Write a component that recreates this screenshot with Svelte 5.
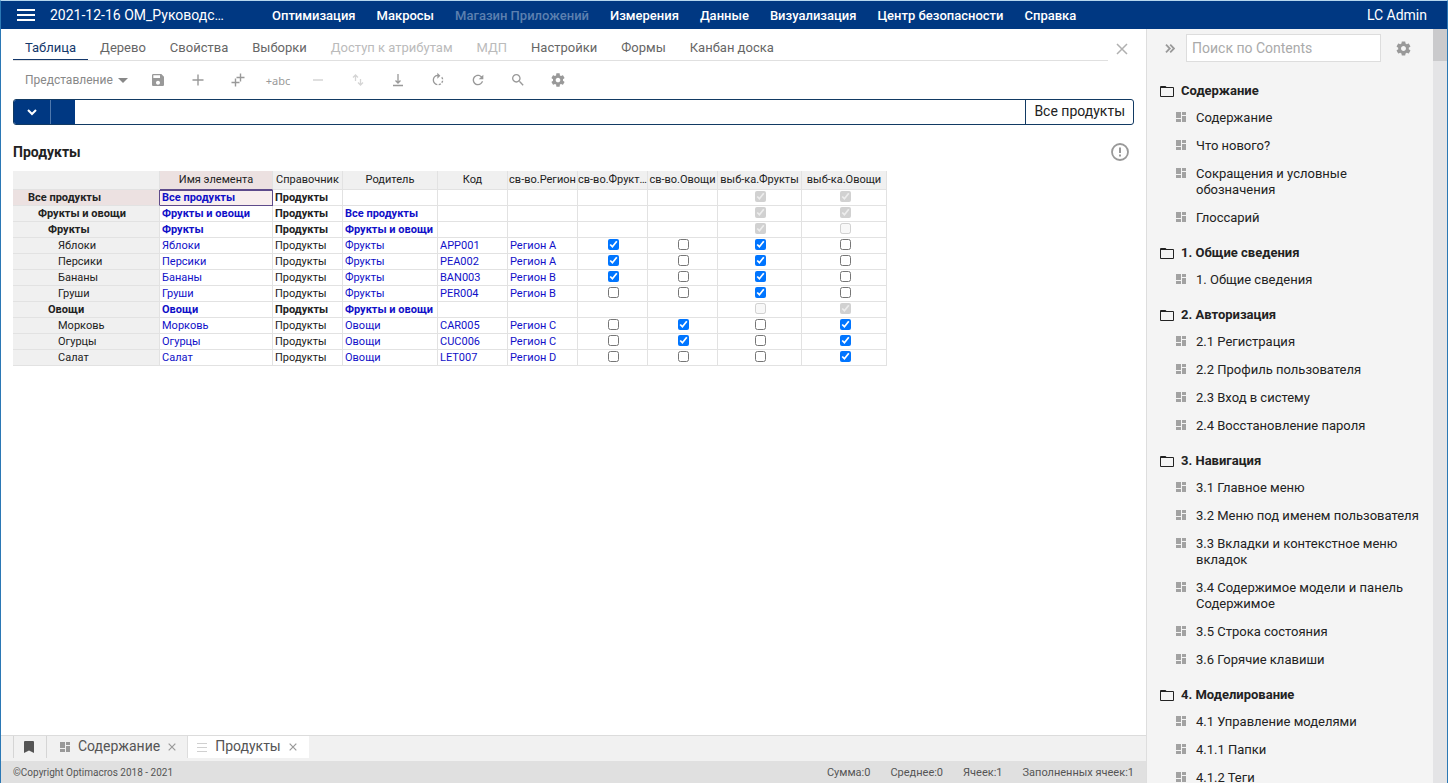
<script>
  const menu = [
    { label: 'Оптимизация' },
    { label: 'Макросы' },
    { label: 'Магазин Приложений', disabled: true },
    { label: 'Измерения' },
    { label: 'Данные' },
    { label: 'Визуализация' },
    { label: 'Центр безопасности' },
    { label: 'Справка' },
  ];

  const tabs = [
    { label: 'Таблица', active: true },
    { label: 'Дерево' },
    { label: 'Свойства' },
    { label: 'Выборки' },
    { label: 'Доступ к атрибутам', disabled: true },
    { label: 'МДП', disabled: true },
    { label: 'Настройки' },
    { label: 'Формы' },
    { label: 'Канбан доска' },
  ];

  const columns = [
    'Имя элемента',
    'Справочник',
    'Родитель',
    'Код',
    'св-во.Регион',
    'св-во.Фрукты',
    'св-во.Овощи',
    'выб-ка.Фрукты',
    'выб-ка.Овощи',
  ];

  const widths = [147, 113, 70, 95, 70, 70, 70, 70, 84, 85];

  // flags: property Fruits, property Vegetables, subset Fruits, subset Vegetables
  const rows = [
    { name: 'Все продукты', level: 0, parent: '', code: '', region: '', flags: [null, null, true, true] },
    { name: 'Фрукты и овощи', level: 1, parent: 'Все продукты', code: '', region: '', flags: [null, null, true, true] },
    { name: 'Фрукты', level: 2, parent: 'Фрукты и овощи', code: '', region: '', flags: [null, null, true, false] },
    { name: 'Яблоки', level: 3, parent: 'Фрукты', code: 'APP001', region: 'Регион A', flags: [true, false, true, false] },
    { name: 'Персики', level: 3, parent: 'Фрукты', code: 'PEA002', region: 'Регион A', flags: [true, false, true, false] },
    { name: 'Бананы', level: 3, parent: 'Фрукты', code: 'BAN003', region: 'Регион B', flags: [true, false, true, false] },
    { name: 'Груши', level: 3, parent: 'Фрукты', code: 'PER004', region: 'Регион B', flags: [false, false, true, false] },
    { name: 'Овощи', level: 2, parent: 'Фрукты и овощи', code: '', region: '', flags: [null, null, false, true] },
    { name: 'Морковь', level: 3, parent: 'Овощи', code: 'CAR005', region: 'Регион C', flags: [false, true, false, true] },
    { name: 'Огурцы', level: 3, parent: 'Овощи', code: 'CUC006', region: 'Регион C', flags: [false, true, false, true] },
    { name: 'Салат', level: 3, parent: 'Овощи', code: 'LET007', region: 'Регион D', flags: [false, false, false, true] },
  ];

  const contents = [
    { title: 'Содержание', items: ['Содержание', 'Что нового?', 'Сокращения и условные обозначения', 'Глоссарий'] },
    { title: '1. Общие сведения', items: ['1. Общие сведения'] },
    { title: '2. Авторизация', items: ['2.1 Регистрация', '2.2 Профиль пользователя', '2.3 Вход в систему', '2.4 Восстановление пароля'] },
    {
      title: '3. Навигация',
      items: [
        '3.1 Главное меню',
        '3.2 Меню под именем пользователя',
        '3.3 Вкладки и контекстное меню вкладок',
        '3.4 Содержимое модели и панель Содержимое',
        '3.5 Строка состояния',
        '3.6 Горячие клавиши',
      ],
    },
    { title: '4. Моделирование', items: ['4.1 Управление моделями', '4.1.1 Папки', '4.1.2 Теги'] },
  ];

  const totals = ['Сумма:0', 'Среднее:0', 'Ячеек:1', 'Заполненных ячеек:1'];
</script>

{#snippet gear(size)}
  <svg width={size} height={size} viewBox="0 0 24 24" fill="currentColor" aria-hidden="true">
    <path d="M19.43 12.98c.04-.32.07-.64.07-.98s-.03-.66-.07-.98l2.11-1.65c.19-.15.24-.42.12-.64l-2-3.46c-.12-.22-.39-.3-.61-.22l-2.49 1c-.52-.4-1.08-.73-1.69-.98l-.38-2.65C14.46 2.18 14.25 2 14 2h-4c-.25 0-.46.18-.49.42l-.38 2.65c-.61.25-1.17.59-1.69.98l-2.49-1c-.23-.09-.49 0-.61.22l-2 3.46c-.13.22-.07.49.12.64l2.11 1.65c-.04.32-.07.65-.07.98s.03.66.07.98l-2.11 1.65c-.19.15-.24.42-.12.64l2 3.46c.12.22.39.3.61.22l2.49-1c.52.4 1.08.73 1.69.98l.38 2.65c.03.24.24.42.49.42h4c.25 0 .46-.18.49-.42l.38-2.65c.61-.25 1.17-.59 1.69-.98l2.49 1c.23.09.49 0 .61-.22l2-3.46c.12-.22.07-.49-.12-.64l-2.11-1.65zM12 15.5c-1.93 0-3.5-1.57-3.5-3.5s1.57-3.5 3.5-3.5 3.500 1.570 3.500 3.500-1.570 3.500-3.500 3.500z" />
  </svg>
{/snippet}

{#snippet dashboard()}
  <svg class="dash" width="10" height="10" viewBox="0 0 10 10" fill="currentColor" aria-hidden="true">
    <path d="M0 0h5v6H0zM6 0h4v3H6zM0 7h5v3H0zM6 4h4v6H6z" />
  </svg>
{/snippet}

{#snippet cross(size, weight)}
  <svg width={size} height={size} viewBox="0 0 12 12" fill="none" stroke="currentColor" stroke-width={weight} aria-hidden="true">
    <path d="M1 1l10 10M11 1L1 11" />
  </svg>
{/snippet}

<div class="app">
  <header class="topbar">
    <button class="burger" aria-label="Меню">
      <svg width="18" height="12" viewBox="0 0 18 12" fill="#fff" aria-hidden="true"><path d="M0 0h18v2H0zM0 5h18v2H0zM0 10h18v2H0z" /></svg>
    </button>
    <div class="model">2021-12-16 ОМ_Руководс…</div>
    <nav class="menu">
      {#each menu as item}
        <button disabled={item.disabled}>{item.label}</button>
      {/each}
    </nav>
    <button class="user">LC Admin</button>
  </header>

  <div class="body">
    <div class="work">
      <main>
        <div class="tabrow">
          <div class="tabs" role="tablist">
            {#each tabs as tab}
              <button role="tab" class:active={tab.active} aria-selected={!!tab.active} disabled={tab.disabled}>{tab.label}</button>
            {/each}
          </div>
          <button class="close" aria-label="Закрыть">{@render cross(12, 1.5)}</button>
        </div>

        <div class="toolbar">
          <button class="view">Представление
            <svg width="10" height="5" viewBox="0 0 10 5" fill="currentColor" aria-hidden="true"><path d="M0 0h10L5 5z" /></svg>
          </button>
          <button class="tool" aria-label="Сохранить">
            <svg width="16" height="16" viewBox="0 0 24 24" fill="currentColor"><path d="M17 3H5c-1.110 0-2 .9-2 2v14c0 1.100.89 2 2 2h14c1.100 0 2-.9 2-2V7l-4-4zm-5 16c-1.660 0-3-1.340-3-3s1.340-3 3-3 3 1.340 3 3-1.340 3-3 3zm3-10H5V5h10v4z" /></svg>
          </button>
          <button class="tool" aria-label="Добавить">
            <svg width="12" height="12" viewBox="0 0 12 12" stroke="currentColor" fill="none"><path d="M6 .5v11M.5 6h11" stroke-width="1.400" /></svg>
          </button>
          <button class="tool" aria-label="Добавить несколько">
            <svg width="14" height="14" viewBox="0 0 14 14" stroke="currentColor" fill="none" stroke-width="1.400"><path d="M9.500.5v8M5.500 4.500h8M4.500 5.500v8M.5 9.500h8" /></svg>
          </button>
          <button class="tool abc">+abc</button>
          <button class="tool" disabled aria-label="Удалить">
            <svg width="10" height="10" viewBox="0 0 10 10" stroke="currentColor"><path d="M0 5h10" stroke-width="1.500" /></svg>
          </button>
          <button class="tool" disabled aria-label="Порядок">
            <svg width="12" height="12" viewBox="0 0 12 12" stroke="currentColor" fill="none" stroke-width="1.300"><path d="M3.500 7V1M1 3.500L3.500 1 6 3.500M8.500 5v6M6 8.500L8.500 11 11 8.500" /></svg>
          </button>
          <button class="tool" aria-label="Экспорт">
            <svg width="12" height="14" viewBox="0 0 12 14" stroke="currentColor" fill="none"><path d="M6 1v9M3.500 7.500l2.500 2.500 2.500-2.500M1 12.500h10" stroke-width="1.300" /></svg>
          </button>
          <button class="tool" aria-label="Пересчитать">
            <svg width="16" height="16" viewBox="0 0 24 24" fill="currentColor"><path d="M15.550 5.550L11 1v3.070C7.060 4.560 4 7.920 4 12s3.050 7.440 7 7.930v-2.020c-2.840-.48-5-2.940-5-5.910s2.160-5.430 5-5.910V10l4.550-4.450zM19.930 11c-.17-1.390-.72-2.730-1.620-3.890l-1.420 1.420c.54.75.88 1.600 1.020 2.470h2.020zM13 17.900v2.020c1.390-.17 2.740-.71 3.900-1.610l-1.440-1.440c-.75.54-1.590.89-2.460 1.030zm3.890-2.420l1.420 1.410c.9-1.160 1.450-2.500 1.620-3.890h-2.020c-.14.87-.48 1.720-1.020 2.480z" /></svg>
          </button>
          <button class="tool" aria-label="Обновить">
            <svg width="16" height="16" viewBox="0 0 24 24" fill="currentColor"><path d="M17.650 6.350C16.200 4.900 14.210 4 12 4c-4.420 0-7.990 3.580-7.990 8s3.570 8 7.990 8c3.730 0 6.840-2.550 7.730-6h-2.080c-.82 2.330-3.040 4-5.650 4-3.310 0-6-2.690-6-6s2.690-6 6-6c1.660 0 3.140.69 4.220 1.780L13 11h7V4l-2.350 2.350z" /></svg>
          </button>
          <button class="tool" aria-label="Поиск">
            <svg width="16" height="16" viewBox="0 0 24 24" fill="currentColor"><path d="M15.500 14h-.79l-.28-.27C15.410 12.590 16 11.110 16 9.500 16 5.910 13.090 3 9.500 3S3 5.910 3 9.500 5.910 16 9.500 16c1.610 0 3.090-.59 4.230-1.570l.27.28v.79l5 4.990L20.490 19l-4.990-5zm-6 0C7.010 14 5 11.990 5 9.500S7.010 5 9.500 5 14 7.010 14 9.500 11.990 14 9.500 14z" /></svg>
          </button>
          <button class="tool" aria-label="Настройки таблицы">{@render gear(16)}</button>
        </div>

        <div class="formula">
          <button class="drop" aria-label="Развернуть">
            <svg width="10" height="7" viewBox="0 0 10 7" fill="none" stroke="#fff" stroke-width="2"><path d="M1 1l4 4 4-4" /></svg>
          </button>
          <span class="block"></span>
          <input type="text" aria-label="Формула" />
          <span class="context">Все продукты</span>
        </div>

        <div class="title">
          <h1>Продукты</h1>
          <button aria-label="Информация">
            <svg width="18" height="18" viewBox="0 0 18 18" fill="none" stroke="currentColor" aria-hidden="true"><circle cx="9" cy="9" r="8" stroke-width="1.800" /><path d="M9 4.500v5.500M9 11.500v2" stroke-width="2" /></svg>
          </button>
        </div>

        <table>
          <colgroup>
            {#each widths as w}<col style="width: {w}px" />{/each}
          </colgroup>
          <thead>
            <tr>
              <td></td>
              {#each columns as column, i}
                <th scope="col" class:hot={i === 0}>{column}</th>
              {/each}
            </tr>
          </thead>
          <tbody>
            {#each rows as row, r}
              <tr class:group={row.level < 3}>
                <th scope="row" class:hot={r === 0} style="padding-left: {15 + row.level * 10}px">{row.name}</th>
                <td class="link" class:selected={r === 0}>{row.name}</td>
                <td>Продукты</td>
                <td class="link">{row.parent}</td>
                <td class="link">{row.code}</td>
                <td class="link">{row.region}</td>
                {#each row.flags as flag, f}
                  <td class="flag">
                    {#if flag !== null}
                      <input type="checkbox" checked={flag} disabled={row.level < 3} aria-label="{row.name}: {columns[f + 5]}" />
                    {/if}
                  </td>
                {/each}
              </tr>
            {/each}
          </tbody>
        </table>
      </main>

      <div class="sheets">
        <button class="mark" aria-label="Закладки">
          <svg width="10" height="12" viewBox="0 0 10 12" fill="currentColor" aria-hidden="true"><path d="M0 1a1 1 0 0 1 1-1h8a1 1 0 0 1 1 1v11L5 9.500 0 12z" /></svg>
        </button>
        <div class="sheet">
          {@render dashboard()}<span>Содержание</span><button aria-label="Закрыть Содержание">{@render cross(8, 1.8)}</button>
        </div>
        <div class="sheet current">
          <svg width="10" height="9" viewBox="0 0 10 9" fill="#d0d0d0" aria-hidden="true"><path d="M0 0h10v1H0zM0 4h10v1H0zM0 8h10v1H0z" /></svg><span>Продукты</span><button aria-label="Закрыть Продукты">{@render cross(8, 1.8)}</button>
        </div>
      </div>

      <footer>
        <span>©Copyright Optimacros 2018 - 2021</span>
        <div class="totals">
          {#each totals as total}<span>{total}</span>{/each}
        </div>
      </footer>
    </div>

    <aside>
      <div class="panel">
        <div class="search">
          <button class="fold" aria-label="Свернуть панель">
            <svg width="10" height="9" viewBox="0 0 10 9" fill="none" stroke="currentColor" stroke-width="1.800" aria-hidden="true"><path d="M1 .7L4.800 4.500 1 8.300M5.200.7L9 4.500 5.200 8.300" /></svg>
          </button>
          <input type="search" placeholder="Поиск по Contents" aria-label="Поиск по Contents" />
          <button class="gear" aria-label="Настройки панели">{@render gear(17)}</button>
        </div>
        {#each contents as section}
          <section>
            <h2>
              <svg width="14" height="11" viewBox="0 0 14 11" aria-hidden="true"><path fill="#222" fill-rule="evenodd" d="M1 0h4.500l1 1H13a1 1 0 0 1 1 1v8a1 1 0 0 1-1 1H1a1 1 0 0 1-1-1V1a1 1 0 0 1 1-1zM1 2v8h12V2z" /></svg>
              {section.title}
            </h2>
            <ul>
              {#each section.items as item}
                <li>{@render dashboard()}<a href="#top">{item}</a></li>
              {/each}
            </ul>
          </section>
        {/each}
      </div>
      <div class="scroll"><div class="thumb"></div></div>
    </aside>
  </div>
</div>

<style>
  :global(body) {
    font-family: Roboto, 'Liberation Sans', sans-serif;
    color: #222;
  }

  .app {
    display: flex;
    flex-direction: column;
    height: 100vh;
    box-sizing: border-box;
    border: 1px solid #2b78b5;
    border-top-color: #b5d6ee;
    border-bottom: 0;
    overflow: hidden;
    background: #fff;
  }

  button {
    font: inherit;
    color: inherit;
    background: none;
    border: 0;
    padding: 0;
    margin: 0;
  }

  button,
  .sheet {
    white-space: nowrap;
  }

  svg {
    flex: none;
    display: block;
  }

  .topbar {
    display: flex;
    align-items: center;
    height: 28px;
    flex: none;
    padding: 0 20px 0 16px;
    background: #003882;
    color: #fff;
    font-size: 14px;
  }

  .model {
    margin-left: 15px;
    width: 222px;
  }

  .menu {
    display: flex;
    flex: 1;
    gap: 21px;
    font-size: 13px;
    font-weight: 500;
  }

  .menu button:disabled {
    color: #5c80b0;
  }

  .body {
    display: flex;
    flex: 1;
    min-height: 0;
  }

  .work {
    display: flex;
    flex-direction: column;
    flex: 1;
    min-width: 0;
  }

  main {
    flex: 1;
    min-height: 0;
    padding: 5px 12px 0;
  }

  .tabrow {
    display: flex;
    align-items: center;
    height: 27px;
  }

  .tabs {
    display: flex;
    flex: 1;
    height: 26px;
    border-bottom: 1px solid #e0e0e0;
    font-size: 13px;
    color: #666;
  }

  .tabs button {
    height: 26px;
    padding: 2px 12px 0;
    border-bottom: 1px solid transparent;
  }

  .tabs .active {
    color: #14386b;
    border-color: #14386b;
  }

  .tabs button:disabled {
    color: #bbb;
  }

  .close {
    margin: 3px 6px 0 8px;
    color: #b0b0b0;
  }

  .toolbar {
    display: flex;
    align-items: center;
    height: 38px;
    color: #999;
  }

  .view {
    display: flex;
    align-items: center;
    gap: 5px;
    width: 125px;
    padding-left: 12px;
    box-sizing: border-box;
    font-size: 12px;
    color: #888;
  }

  .tool {
    display: flex;
    justify-content: center;
    align-items: center;
    width: 40px;
    height: 24px;
  }

  .tool:disabled {
    color: #d5d5d5;
  }

  .abc {
    font-family: 'Noto Sans', sans-serif;
    font-size: 11px;
  }

  .formula {
    display: flex;
    height: 26px;
    box-sizing: border-box;
    border: 1px solid #123a63;
    border-radius: 3px;
    overflow: hidden;
    font-size: 14px;
  }

  .drop {
    display: flex;
    justify-content: center;
    align-items: center;
    width: 37px;
    background: #003882;
    border-right: 1px solid #4f78ad;
  }

  .block {
    width: 24px;
    background: #003882;
  }

  .formula input {
    flex: 1;
    min-width: 0;
    border: 0;
    outline: 0;
  }

  .context {
    padding: 0 8px;
    line-height: 22px;
    border-left: 1px solid #123a63;
  }

  .title {
    display: flex;
    justify-content: space-between;
    align-items: center;
    height: 46px;
    padding-right: 5px;
  }

  .title button {
    margin-top: 8px;
    color: #999;
  }

  h1 {
    margin: 8px 0 0;
    font-size: 14px;
    font-weight: 700;
  }

  table {
    table-layout: fixed;
    width: 874px;
    border-collapse: separate;
    border-spacing: 0;
    font-size: 11px;
  }

  th,
  td {
    box-sizing: border-box;
    height: 16px;
    padding: 0 2px;
    line-height: 15px;
    font-weight: 400;
    text-align: left;
    white-space: nowrap;
    overflow: hidden;
    border-right: 1px solid #e2e2e2;
    border-bottom: 1px solid #e2e2e2;
  }

  thead th,
  thead td {
    height: 19px;
    padding: 0 0 1px;
    text-align: center;
    text-overflow: ellipsis;
    background: #f0f0f0;
  }

  tbody th {
    background: #f0f0f0;
  }

  .group th,
  .group td {
    font-weight: 700;
  }

  thead .hot,
  tbody .hot {
    background: #ece1e1;
  }

  thead .hot {
    border-bottom-color: #5e4b8b;
  }

  tbody .hot {
    border-right-color: #5e4b8b;
  }

  .link {
    color: #1010c8;
  }

  .selected {
    background: #f8eeee;
    box-shadow: inset 0 1px #5e4b8b;
    border-color: #5e4b8b;
  }

  .flag {
    padding: 0 0 2px 2px;
    text-align: center;
    line-height: 0;
  }

  .flag input {
    width: 11px;
    height: 11px;
    margin: 0;
    vertical-align: middle;
  }

  .sheets {
    display: flex;
    flex: none;
    height: 25px;
    padding-left: 12px;
    border-top: 1px solid #dcdcdc;
    background: #f1f1f1;
    font-size: 14px;
    color: #555;
  }

  .mark {
    display: flex;
    align-items: center;
    justify-content: center;
    width: 34px;
    height: 22px;
    box-sizing: border-box;
    padding-right: 2px;
    border-left: 1px solid #d5d5d5;
    border-right: 1px solid #d5d5d5;
  }

  .sheet {
    display: flex;
    align-items: center;
    gap: 8px;
    height: 22px;
    box-sizing: border-box;
    padding: 0 11px 2px 13px;
    border-right: 1px solid #ddd;
    color: #555;
  }

  .sheet.current {
    padding: 0 12px 2px 9px;
    background: #fff;
    border-right: 0;
  }

  .sheet svg {
    margin-top: 2px;
  }

  .sheet button,
  .dash {
    color: #999;
  }

  footer {
    display: flex;
    flex: none;
    justify-content: space-between;
    align-items: center;
    height: 22px;
    padding: 0 12px;
    background: #e0e0e0;
    font-size: 10px;
    color: #555;
  }

  .totals {
    display: flex;
    gap: 20px;
    font-size: 11px;
  }

  aside {
    display: flex;
    flex: none;
    width: 301px;
    box-sizing: border-box;
    border-left: 1px solid #dedede;
    background: #f4f4f4;
  }

  .panel {
    flex: 1;
    min-width: 0;
    overflow: hidden;
    padding: 5px 12px 0 13px;
    font-size: 13px;
    line-height: 16px;
  }

  .search {
    display: flex;
    align-items: center;
    margin-bottom: 19px;
  }

  .fold {
    width: 26px;
    padding-left: 5px;
    box-sizing: border-box;
    color: #999;
  }

  .search input {
    width: 195px;
    height: 28px;
    box-sizing: border-box;
    padding: 0 5px;
    border: 1px solid #ddd;
    border-radius: 0;
    outline: 0;
    background: #fff;
    font: 14px Roboto, sans-serif;
  }

  .search input::placeholder {
    color: #aaa;
  }

  .gear {
    margin-left: 14px;
    color: #999;
  }

  h2 {
    display: flex;
    align-items: center;
    gap: 7px;
    margin: 0;
    padding: 2px 0 5px;
    font-size: 13px;
    line-height: 16px;
    font-weight: 700;
  }

  ul {
    list-style: none;
    margin: 0;
    padding: 0 0 11px 16px;
  }

  li {
    display: flex;
    align-items: flex-start;
    gap: 10px;
    padding: 6px 0;
  }

  li .dash {
    margin-top: 2px;
    color: #a2a2a2;
  }

  a {
    color: inherit;
    text-decoration: none;
  }

  .scroll {
    width: 14px;
    background: #e4e4e6;
  }

  .thumb {
    height: 32px;
    background: #cacacc;
  }
</style>
